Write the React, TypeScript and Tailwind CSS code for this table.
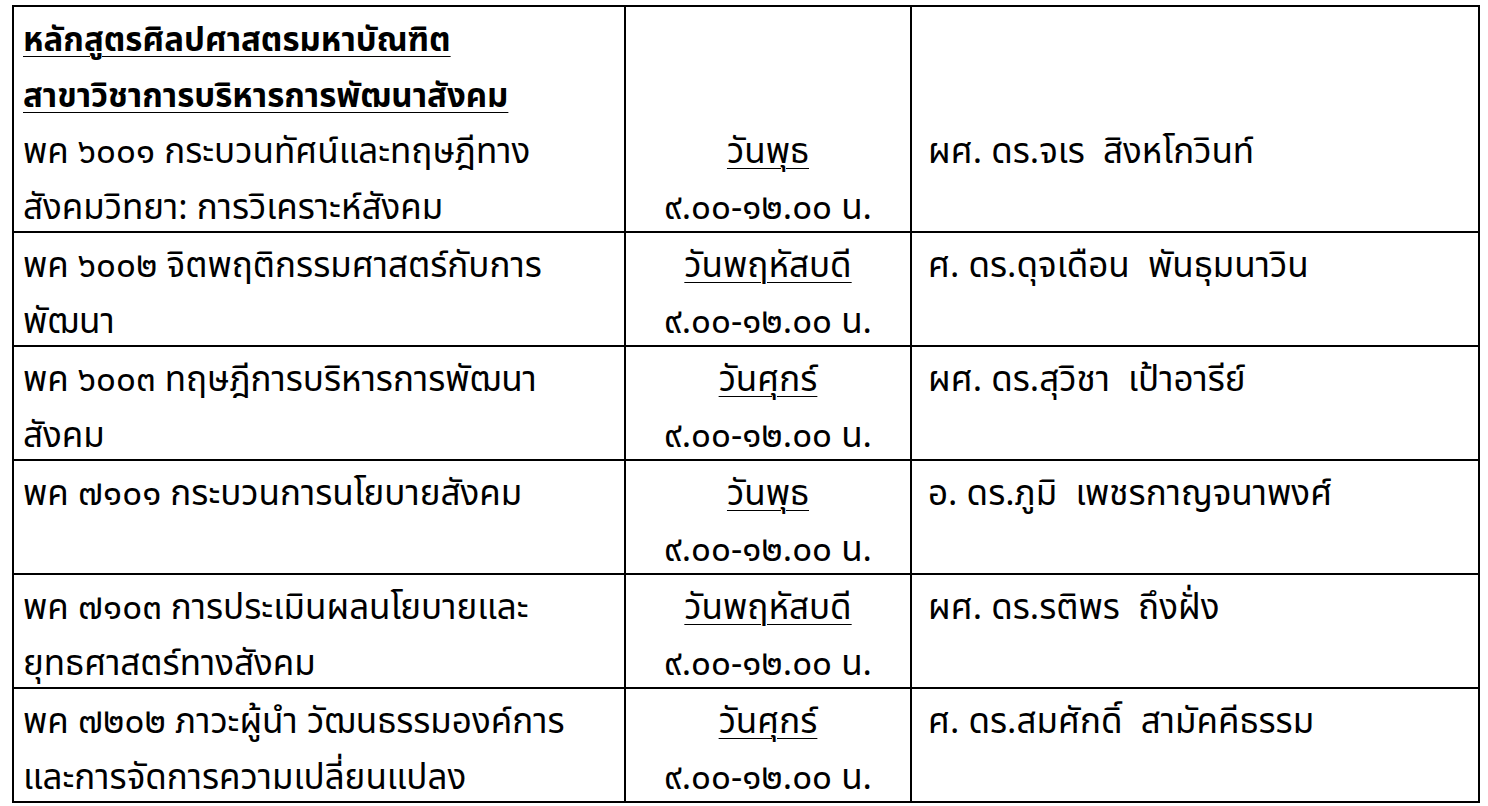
const rows = [
  {
    course: ["พค ๖๐๐๑ กระบวนทัศน์และทฤษฎีทาง", "สังคมวิทยา: การวิเคราะห์สังคม"],
    day: "วันพุธ",
    teacher: "ผศ. ดร.จเร  สิงหโกวินท์",
  },
  {
    course: ["พค ๖๐๐๒ จิตพฤติกรรมศาสตร์กับการ", "พัฒนา"],
    day: "วันพฤหัสบดี",
    teacher: "ศ. ดร.ดุจเดือน  พันธุมนาวิน",
  },
  {
    course: ["พค ๖๐๐๓ ทฤษฎีการบริหารการพัฒนา", "สังคม"],
    day: "วันศุกร์",
    teacher: "ผศ. ดร.สุวิชา  เป้าอารีย์",
  },
  {
    course: ["พค ๗๑๐๑ กระบวนการนโยบายสังคม"],
    day: "วันพุธ",
    teacher: "อ. ดร.ภูมิ  เพชรกาญจนาพงศ์",
  },
  {
    course: ["พค ๗๑๐๓ การประเมินผลนโยบายและ", "ยุทธศาสตร์ทางสังคม"],
    day: "วันพฤหัสบดี",
    teacher: "ผศ. ดร.รติพร  ถึงฝั่ง",
  },
  {
    course: ["พค ๗๒๐๒ ภาวะผู้นำ วัฒนธรรมองค์การ", "และการจัดการความเปลี่ยนแปลง"],
    day: "วันศุกร์",
    teacher: "ศ. ดร.สมศักดิ์  สามัคคีธรรม",
  },
];

// each text line sits in a 56px box; the taller line-height pushes glyphs down a bit
function Line({ children, className = "" }: { children: React.ReactNode; className?: string }) {
  return <div className={"h-[56px] leading-[68px] " + className}>{children}</div>;
}

function TimeCell({ day }: { day: string }) {
  return (
    <div className="text-center">
      <Line>
        <span className="underline decoration-1 underline-offset-[5px]">{day}</span>
      </Line>
      <Line>๙.๐๐-๑๒.๐๐ น.</Line>
    </div>
  );
}

export default function App() {
  return (
    <div
      className="min-h-screen bg-white text-black pl-[12px] pt-[5px]"
      style={{ fontFamily: '"Noto Sans Thai", "Noto Sans Thai Looped", "Noto Sans", sans-serif' }}
    >
      <table className="table-fixed border-collapse text-[35px] w-[1466px]">
        <colgroup>
          <col className="w-[612px]" />
          <col className="w-[286px]" />
          <col className="w-[568px]" />
        </colgroup>
        <tbody>
          {rows.map((r, i) => (
            <tr key={i}>
              <td className="border-2 border-black align-top pl-[9px] whitespace-pre">
                {i === 0 && (
                  <div className="text-[33px] font-bold underline decoration-1 underline-offset-[5px]">
                    <Line>หลักสูตรศิลปศาสตรมหาบัณฑิต</Line>
                    <Line>สาขาวิชาการบริหารการพัฒนาสังคม</Line>
                  </div>
                )}
                {r.course.map((c, j) => (
                  <Line key={j}>{c}</Line>
                ))}
              </td>
              <td className="border-2 border-black align-top">
                {i === 0 && <div className="h-[112px]" />}
                <TimeCell day={r.day} />
              </td>
              <td className="border-2 border-black align-top pl-[16px] whitespace-pre">
                {i === 0 && <div className="h-[112px]" />}
                <Line>{r.teacher}</Line>
              </td>
            </tr>
          ))}
        </tbody>
      </table>
    </div>
  );
}
